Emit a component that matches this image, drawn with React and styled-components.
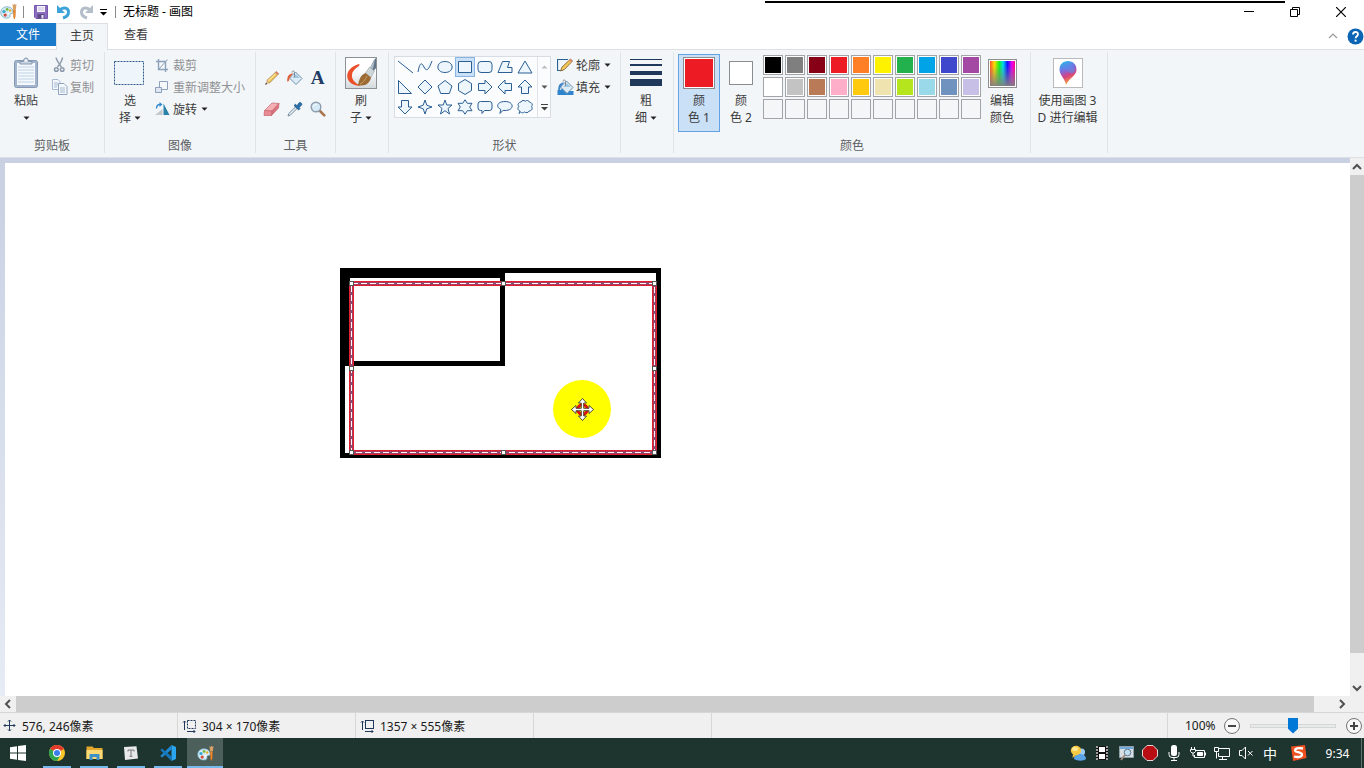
//External
import React, { useState } from 'react';
import styled, { createGlobalStyle } from 'styled-components';

//Colours
const colours = {
  ribbon: '#f3f6f8',
  line: '#dcdfe3',
  text: '#3b3b3b',
  disabled: '#8f9194',
  primary: '#1979ca',
  ink: '#2b5f94',
  selected: '#c9e0f7',
  selectedBorder: '#62a2e4',
  chrome: '#f0f0f0',
  thumb: '#cdcdcd',
  taskbar: '#1e342f',
  underline: '#76b9ed',
};

const GlobalStyle = createGlobalStyle`
  * {
    box-sizing: border-box;
  }

  body {
    margin: 0;
    overflow: hidden;
    font-family: "Noto Sans", "Noto Sans CJK SC", sans-serif;
    font-size: 12px;
    color: ${ colours.text };
  }

  button {
    font: inherit;
    color: inherit;
    background: none;
    border: 0;
    padding: 0;
    margin: 0;
  }

  svg {
    display: block;
    flex: none;
  }
`;

const Window = styled.div`
  display: flex;
  flex-direction: column;
  min-height: 100vh;
  background: #fff;
`;

//Title bar
const TitleBar = styled.header`
  position: relative;
  display: flex;
  align-items: center;
  height: 23px;
  color: #000;
`;

const QuickAccess = styled.div`
  display: flex;
  align-items: center;
  gap: 6px;
  margin-right: 3px;
`;

const QuickButton = styled.button`
  display: flex;
  justify-content: center;
  width: ${ props => props.$narrow ? '8px' : '16px' };
`;

const Divider = styled.span`
  width: 1px;
  height: 12px;
  margin: 0 4px 0 1px;
  background: #8a8a8a;
`;

const Title = styled.h1`
  margin: 0;
  font-size: 12px;
  font-weight: normal;
  line-height: 16px;
`;

const WindowButtons = styled.div`
  display: flex;
  margin-left: auto;
`;

const WindowButton = styled.button`
  display: flex;
  align-items: center;
  justify-content: center;
  width: 46px;
  height: 22px;
`;

const ShareMark = styled.span`
  position: absolute;
  top: 1px;
  right: 79px;
  width: 520px;
  height: 2px;
  background: #000;
`;

//Tabs
const Tabs = styled.nav`
  display: flex;
  height: 27px;
  border-bottom: 1px solid ${ colours.line };
`;

const Tab = styled.button`
  height: ${ props => props.$active ? '27px' : '23px' };
  width: ${ props => props.$wide ? '56px' : '52px' };
  line-height: 23px;
  background: ${ props => props.$file ? colours.primary : props.$active ? colours.ribbon : 'none' };
  color: ${ props => props.$file ? '#fff' : colours.text };
  border: solid ${ colours.line };
  border-width: ${ props => props.$active ? '1px 1px 0' : '0' };
  padding-bottom: ${ props => props.$active ? '4px' : '0' };
`;

const TabsEnd = styled.div`
  display: flex;
  align-items: center;
  gap: 9px;
  margin-left: auto;
`;

//Ribbon
const Ribbon = styled.section`
  display: flex;
  height: 108px;
  background: ${ colours.ribbon };
  border-bottom: 1px solid ${ colours.line };
`;

const Group = styled.div`
  display: flex;
  flex: none;
  flex-direction: column;
  width: ${ props => props.$width };
  margin: 2px 0 4px;
  padding-top: 2px;
  border-right: 1px solid #e0e4e8;
`;

const GroupBody = styled.div`
  display: flex;
  flex: 1;
  align-items: flex-start;
  padding: 0 4px;
  gap: ${ props => props.$gap || '0' };
`;

const GroupLabel = styled.span`
  line-height: 18px;
  height: 16px;
  text-align: center;
  color: #5c5f63;
`;

const BigButton = styled.button`
  display: flex;
  flex: none;
  flex-direction: column;
  align-items: center;
  width: ${ props => props.$width || '42px' };
  height: 78px;
  padding: 2px 0;
  line-height: 17px;
  white-space: nowrap;
  background: ${ props => props.$active ? colours.selected : 'none' };
  border: 1px solid ${ props => props.$active ? colours.selectedBorder : 'transparent' };
`;

const BigIcon = styled.span`
  display: flex;
  align-items: center;
  justify-content: center;
  height: 32px;
  margin-bottom: 3px;
`;

const TextLine = styled.span`
  display: flex;
  align-items: center;
  gap: 3px;
  height: 17px;
`;

const SmallButtons = styled.div`
  display: flex;
  flex-direction: column;
`;

const SmallButton = styled.button`
  display: flex;
  align-items: center;
  gap: 2px;
  height: 22px;
  padding: 0 2px;
  white-space: nowrap;
  color: ${ props => props.disabled ? colours.disabled : colours.text };
`;

const SmallLabel = styled.span`
  margin-right: 2px;
`;

const ToolGrid = styled.div`
  display: grid;
  grid-template-columns: repeat(3, 23px);
  grid-auto-rows: 31px;
  padding-top: 8px;
`;

const ToolButton = styled.button`
  display: flex;
  align-items: center;
  justify-content: center;
`;

const Gallery = styled.div`
  display: flex;
  gap: 2px;
  margin: 2px 0 0 1px;
  background: #fafcfd;
  border: 1px solid #d8dde3;
`;

const ShapeGrid = styled.div`
  display: grid;
  grid-template-columns: repeat(7, 20px);
  grid-auto-rows: 20px;
`;

const ShapeButton = styled.button`
  display: flex;
  align-items: center;
  justify-content: center;
  background: ${ props => props.$active ? colours.selected : 'none' };
  border: 1px solid ${ props => props.$active ? '#88b4e4' : 'transparent' };
`;

const GalleryScroll = styled.div`
  display: grid;
  grid-template-rows: repeat(3, 20px);
  width: 13px;
  border-left: 1px solid #e0e4e8;
`;

const Swatch = styled.span`
  width: ${ props => props.$size };
  height: ${ props => props.$size };
  background: ${ props => props.$colour };
  border: 1px solid #8a8c90;
  box-shadow: inset 0 0 0 1px #fff;
`;

const Palette = styled.div`
  display: grid;
  grid-template-columns: repeat(10, 20px);
  grid-auto-rows: 20px;
  gap: 2px;
  padding: 1px;
`;

const PaletteCell = styled.button`
  background: ${ props => props.$colour || '#f5f6f7' };
  border: 1px solid #a2a4a8;
  box-shadow: inset 0 0 0 1px ${ props => props.$colour ? '#fff' : '#f5f6f7' };
`;

const Spectrum = styled.span`
  width: 29px;
  height: 29px;
  border: 1px solid #8f8f8f;
  box-shadow: inset 0 0 0 1px #fff;
  background:
    linear-gradient(transparent 20%, #808080),
    linear-gradient(90deg, #f33, #fd0 20%, #1e2 38%, #0de 52%, #11f 68%, #e0e 85%, #f06);
`;

const Framed = styled.span`
  display: flex;
  align-items: center;
  justify-content: center;
  width: 30px;
  height: 30px;
  background: #fff;
  border: 1px solid #b8babd;
`;

const BrushFrame = styled(Framed)`
  width: 32px;
  height: 32px;
  border-color: #8d9299;
  background: linear-gradient(#fff 40%, #d4dade);
`;

//Work area
const WorkArea = styled.main`
  display: grid;
  flex: 1;
  grid-template-columns: 1fr 14px;
  grid-template-rows: 1fr 16px;
  background: ${ colours.chrome };
`;

const Desk = styled.div`
  display: flex;
  padding: 5px 0 0 5px;
  background: linear-gradient(#c8d0e1, #e6ebf5);
`;

const Canvas = styled.div`
  flex: 1;
  background: #fff;
`;

const VerticalScroll = styled.div`
  display: flex;
  flex-direction: column;
  padding-top: 1px;
`;

const HorizontalScroll = styled.div`
  display: flex;
`;

const ScrollButton = styled.button`
  display: flex;
  flex: none;
  align-items: center;
  justify-content: center;
  width: 16px;
  height: 16px;

  ${ VerticalScroll } & {
    width: 14px;
  }
`;

const ScrollTrack = styled.div`
  display: flex;
  flex: 1;
  flex-direction: ${ props => props.$vertical ? 'column' : 'row' };
`;

const ScrollThumb = styled.div`
  flex: 0 0 calc( 100% - ${ props => props.$rest } );
  background: ${ colours.thumb };
`;

//Status bar
const StatusBar = styled.footer`
  display: flex;
  height: 26px;
  color: #1a1a1a;
  background: ${ colours.chrome };
  border-top: 1px solid #d7d7d7;
`;

const StatusCell = styled.div`
  display: flex;
  align-items: center;
  gap: 4px;
  width: 178px;
  padding-left: ${ props => props.$first ? '2px' : '4px' };
  border-right: 1px solid #d7d7d7;
`;

const ZoomControls = styled.div`
  display: flex;
  align-items: center;
  margin-left: auto;
  padding: 0 1px 0 17px;
  border-left: 1px solid #d7d7d7;
`;

const ZoomLabel = styled.label`
  width: 38px;
`;

const ZoomSlider = styled.input`
  appearance: none;
  width: 86px;
  height: 16px;
  margin: 0 9px;
  background: none;

  &::-webkit-slider-runnable-track {
    height: 4px;
    background: #e7eaea;
    border: 1px solid #d6d6d6;
  }

  &::-webkit-slider-thumb {
    appearance: none;
    width: 10px;
    height: 16px;
    margin-top: -7px;
    background: #0078d7;
    clip-path: polygon(0 0, 100% 0, 100% 70%, 50% 100%, 0 70%);
  }
`;

//Taskbar
const Taskbar = styled.div`
  display: flex;
  height: 30px;
  background: ${ colours.taskbar };
`;

const Apps = styled.div`
  display: flex;
  gap: 1px;
`;

const AppButton = styled.button`
  display: flex;
  align-items: center;
  justify-content: center;
  width: 36px;
  height: 30px;
  background: linear-gradient(${ props => props.$open ? colours.underline : 'transparent' } 0 0) bottom / ${ props => props.$active ? '36px' : '28px' } 2px no-repeat ${ props => props.$active ? '#4c5f5b' : 'transparent' };
`;

const StartButton = styled(AppButton)`
  width: 38px;
  padding-right: 2px;
`;

const Tray = styled.div`
  display: flex;
  align-items: center;
  margin-left: auto;
  color: #fff;
  border-right: 1px solid #61726e;
  margin-right: 2px;
`;

const TrayButton = styled.button`
  display: flex;
  align-items: center;
  justify-content: center;
  width: ${ props => props.$width || '24px' };
  height: 30px;
`;

const Ime = styled.span`
  font-size: 14px;
`;

//Icons
const Arrow = ({ colour = '#222' }) => (
  <svg width="7" height="4" viewBox="0 0 7 4"><path d="M0.5 0.5h6L3.5 3.7z" fill={ colour } /></svg>
);

const Chevron = ({ turn = 0, colour = '#505050', size = 10, stroke = 2 }) => (
  <svg width={ size } height={ size } viewBox="0 0 10 10">
    <path d="M1 7l4-4 4 4" fill="none" stroke={ colour } strokeWidth={ stroke } transform={ `rotate(${ turn } 5 5)` } />
  </svg>
);

const PaintIcon = () => (
  <svg width="17" height="17" viewBox="0 0 18 18">
    <path d="M7.500 4C3.500 4 .8 6.500.8 10c0 3.600 2.700 6 6.500 6 3 0 3.600-1.500 3.300-2.900-.3-1.500.6-1.900 1.900-2 1.500-.1 1.800-1.300 1.300-2.900C13 5.700 10.800 4 7.500 4z" fill="#d5eaf5" stroke="#6ca6bd" strokeWidth=".8" />
    <circle cx="4.200" cy="9" r="1.700" fill="#35a7cf" />
    <circle cx="7.500" cy="6.800" r="1.500" fill="#79b83c" />
    <circle cx="10.700" cy="8" r="1.300" fill="#e5b02a" />
    <circle cx="5.500" cy="12.800" r="1.700" fill="#d34d3a" />
    <circle cx="9" cy="11.300" r="1.100" fill="#fff" />
    <path d="M14 7h2.500l-.4 7.500-.9 2.500-.9-2.500z" fill="#ee8b2d" stroke="#b3611a" strokeWidth=".4" />
    <path d="M13.200 1l1.200 1 1-1.300 1 1.200 1.100-.6-.7 5.200h-3z" fill="#d9a066" />
  </svg>
);

const SaveIcon = () => (
  <svg width="16" height="16" viewBox="0 0 16 16">
    <path d="M.5 1.500h13v13H2l-1.500-1.500z" fill="#8a6cc0" stroke="#7657ae" />
    <path d="M3 2h8v6H3z" fill="#f6f4fb" />
    <path d="M4 4h6M4 6h6" stroke="#c9bfe2" />
    <path d="M3.500 10h7v4.500h-7z" fill="#5b4a85" />
    <path d="M7.500 11h2v3.500h-2z" fill="#e9e4f4" />
  </svg>
);

const UndoIcon = ({ colour, flip }) => (
  <svg width="16" height="16" viewBox="0 0 16 16">
    <g transform={ flip ? 'matrix(-1 0 0 1 16 0)' : undefined }>
      <path d="M1 1v8h8z" fill={ colour } />
      <path d="M4.500 5.500C8 2.500 12.500 4 12.500 8c0 3.500-2 5-5.500 6" fill="none" stroke={ colour } strokeWidth="3" />
    </g>
  </svg>
);

const ClipboardIcon = () => (
  <svg width="26" height="32" viewBox="0 0 26 32">
    <rect x="1.500" y="3.500" width="23" height="27" rx="2" fill="#a3b5cd" stroke="#8799b4" />
    <path d="M4 6h18v22H4z" fill="#f5f9fd" />
    <path d="M5 10h16M5 13h16M5 16h16M5 19h16M5 22h16M5 25h16" stroke="#bed1e6" />
    <path d="M7 7V4.500h3.500C10.500 2 11.500 1 13 1s2.500 1 2.500 3.500H19V7z" fill="#ccd6e3" stroke="#8597b0" />
    <circle cx="13" cy="3.500" r="1" fill="#fff" />
  </svg>
);

const ScissorsIcon = () => (
  <svg width="16" height="16" viewBox="0 0 16 16" fill="none" stroke="#8d99ac" strokeWidth="1.500">
    <path d="M4 .5c.5 3 3 6 5.500 9.500M10.500.5C10 4 8 7 5.500 10" />
    <circle cx="4.300" cy="12.500" r="1.800" /><circle cx="10.200" cy="12.500" r="1.800" />
  </svg>
);

const CopyIcon = () => (
  <svg width="16" height="16" viewBox="0 0 16 16" fill="#f4f8fc" stroke="#a9bbd2">
    <path d="M.5.5h5.500l2 2v8H.5z" /><path d="M2 4h4M2 6h4M2 8h3" />
    <path d="M6.500 4.500H12l3 3v8H6.500z" stroke="#91a5c0" /><path d="M8 9h5M8 11h5M8 13h5" />
  </svg>
);

const SelectIcon = () => (
  <svg width="32" height="26" viewBox="0 0 32 26">
    <rect x=".5" y="1.500" width="29" height="23" fill="#eef6fc" stroke="#2f5888" strokeDasharray="2 1" />
  </svg>
);

const CropIcon = () => (
  <svg width="16" height="16" viewBox="0 0 16 16" fill="none" stroke="#8ea1bb">
    <path d="M3.500 2v10.500H13M1 4.500h9.500V15" strokeWidth="1.400" /><path d="M4 12L12.500 2.500" />
  </svg>
);

const ResizeIcon = () => (
  <svg width="16" height="16" viewBox="0 0 16 16" fill="#f4f8fc" stroke="#8ea1bb">
    <path d="M4.500 2.500h8v8h-8z" /><path d="M.5 8.500h6v5h-6z" fill="#dfe8f2" />
  </svg>
);

const RotateIcon = () => (
  <svg width="16" height="16" viewBox="0 0 16 16">
    <path d="M0 14L7.500 8v6z" fill="#c3c8cd" />
    <path d="M8.500 2.500V14h6z" fill="#2a82a8" />
    <path d="M1.500 7.500c0-3 1.500-4 3.500-4" fill="none" stroke="#3289ce" strokeWidth="1.400" />
    <path d="M4.500 1L7.500 3.500 4.500 6z" fill="#3289ce" />
  </svg>
);

const PencilIcon = () => (
  <svg width="16" height="16" viewBox="0 0 16 16">
    <path d="M12.300 1.500l2.400 2.300-9.200 9.200-2.700-2.400z" fill="#f0c456" stroke="#9b7236" strokeWidth=".7" />
    <path d="M3.800 10.400l7.200-7 .9.900-7.200 7z" fill="#fbe7a0" />
    <path d="M12.300 1.500l2.400 2.300-1.300 1.300-2.400-2.300z" fill="#dc8576" />
    <path d="M2.800 10.600l2.700 2.400L1.300 14.700z" fill="#dcb98f" />
    <path d="M1.300 14.700l.6-1.900 1.300 1.200z" fill="#222" />
  </svg>
);

const BucketIcon = ({ pool }) => (
  <svg width="17" height="16" viewBox="0 0 16 16">
    { pool && <path d="M0 11h3l2-2 3 3h8v4H0z" fill="#2e84cd" /> }
    <path d="M9 2l6.500 6.500-6 6L3 8z" fill="#dcebf5" stroke="#6c91ae" />
    <path d="M5.500 8l4-3.800 3.800 3.800z" fill="#9fc6df" />
    <path d="M8 7V2.500C8 .5 5.500.5 5.500 2.500" fill="none" stroke="#7b8997" />
    <path d="M6.500 3.500C3 3.500.5 5.500.7 11.500c2 .5 2-2 2.500-3.500z" fill={ pool ? '#3e86c7' : '#e0603b' } />
  </svg>
);

const LetterIcon = styled.span`
  font-family: "Liberation Serif", serif;
  font-size: 19px;
  font-weight: bold;
  line-height: 20px;
  color: #203c66;
`;

const EraserIcon = () => (
  <svg width="18" height="16" viewBox="0 0 18 16" stroke="#c66470" strokeWidth=".7">
    <path d="M1.500 9.500L9 2l7 .5L9 10z" fill="#f4b0b4" />
    <path d="M1.500 9.500L9 10l-.5 4.500H1z" fill="#e98a92" />
    <path d="M9 10l7-7.500-.5 4.500-7 7.500z" fill="#d9737e" />
  </svg>
);

const PickerIcon = () => (
  <svg width="16" height="16" viewBox="0 0 16 16">
    <path d="M9 5.500l1.500 1.500-7 7-2.500 1 .8-2.500z" fill="#e6f0f7" stroke="#768a9c" />
    <path d="M7 4.500l1.500-1.300L10 4.700 12 2c1.300-1.500 3.800.8 2.500 2.300L12 6.500l1 1L11.700 9z" fill="#2772ad" stroke="#164978" strokeWidth=".7" />
  </svg>
);

const MagnifierIcon = () => (
  <svg width="16" height="16" viewBox="0 0 16 16">
    <path d="M9.500 9.500l4.800 4.800" stroke="#a9754c" strokeWidth="2.600" strokeLinecap="round" />
    <circle cx="6" cy="6" r="4.800" fill="#d5e9f7" stroke="#8d9dad" strokeWidth="1.400" />
    <path d="M3.500 5.500C4 4 5 3.500 6.500 3.500" stroke="#fff" fill="none" />
  </svg>
);

const BrushIcon = () => (
  <svg width="30" height="30" viewBox="0 0 30 30">
    <path d="M13 6C5 8 0 14 1.500 20c1.200 5 6 7.500 13 8-5-3-9-6-8.500-11 .3-4 3-6 7-9 0 0 1-1.500 0-2z" fill="#ea4f2a" />
    <path d="M24 10l4-8 2-2v10l-3 4z" fill="#5f7489" />
    <path d="M24 10l5-9-2 10z" fill="#aebdca" />
    <path d="M19.500 15l4-6 5 4-3.500 6.500z" fill="#cfd6da" stroke="#8f999f" strokeWidth=".5" />
    <path d="M12 27c1-4 2-10 7.500-12l5.500 4.500c-1 5.500-6 9.500-13 7.500z" fill="#9c6a35" />
    <path d="M14 26c3-1 5-4 7-8" stroke="#cf9f5c" fill="none" />
  </svg>
);

const OutlineIcon = () => (
  <svg width="17" height="16" viewBox="0 0 17 16">
    <path d="M11 2.500H.5v11h5" fill="none" stroke="#2a6396" strokeWidth="1.200" />
    <path d="M13.500 2l2 2-8 8.500-4 1.500 1.500-4z" fill="#f0c456" stroke="#82602d" strokeWidth=".8" />
    <path d="M13.500 2l2 2-1.300 1.300-2.100-2z" fill="#dc8576" />
  </svg>
);

const ThicknessIcon = () => (
  <svg width="32" height="28" viewBox="0 0 32 28" fill="#20385a">
    <path d="M0 0h32v1H0zM0 5h32v2H0zM0 12h32v4H0zM0 20h32v7H0z" />
  </svg>
);

const Paint3DIcon = () => (
  <svg width="20" height="26" viewBox="0 0 20 26">
    <defs>
      <linearGradient id="drop" x1="0.300" y1="0" x2="0.600" y2="1">
        <stop offset="0" stopColor="#28b9e8" />
        <stop offset=".35" stopColor="#7d6be0" />
        <stop offset=".62" stopColor="#d8417e" />
        <stop offset="1" stopColor="#ffc02e" />
      </linearGradient>
    </defs>
    <path d="M10 1c5 0 8.500 3.500 8.500 8.500 0 6.500-7 8-10.500 15.500C7.500 19 1.500 15.500 1.500 9.500 1.500 4.500 5 1 10 1z" fill="url(#drop)" />
    <path d="M4 8c1-4 4-5 7-4 4 1 6 4 6 7-1 3-4 3-6 1S6 9 4 8z" fill="#4d94ee" opacity=".5" />
  </svg>
);

const HelpIcon = () => (
  <svg width="17" height="17" viewBox="0 0 17 17">
    <circle cx="8.500" cy="8.500" r="8" fill="#0b64b4" />
    <path d="M6 6.500C6 3.200 11 3.200 11 6.300c0 2-2.400 2-2.400 4" fill="none" stroke="#fff" strokeWidth="1.800" />
    <circle cx="8.600" cy="12.700" r="1.100" fill="#fff" />
  </svg>
);

const shapes = [
  { name: '直线', path: 'M1 2l15 12' },
  { name: '曲线', path: 'M1 13C3 2 5 4 7 8s4 5 8-6' },
  { name: '椭圆形', path: 'M8 2.500c9.500 0 9.500 11 0 11s-9.500-11 0-11z' },
  { name: '矩形', path: 'M1.500 2.500h13v11h-13z' },
  { name: '圆角矩形', path: 'M4 2.500h8q3 0 3 3v5q0 3-3 3H4q-3 0-3-3v-5q0-3 3-3z' },
  { name: '多边形', path: 'M5.500 2.500h7l-2 6h4.500v5H1z' },
  { name: '三角形', path: 'M8 2l7 12H1z' },
  { name: '直角三角形', path: 'M1.500 1.500v13h13z' },
  { name: '菱形', path: 'M8 1l7 7-7 7-7-7z' },
  { name: '五边形', path: 'M8 1.500l7 5.500-2.700 7.500H3.700L1 7z' },
  { name: '六边形', path: 'M8 .5l6.500 4v7l-6.500 4-6.500-4v-7z' },
  { name: '右箭头', path: 'M1.500 4.500H8v-3.500l7 7-7 7v-3.500H1.500z' },
  { name: '左箭头', path: 'M14.500 4.500H8v-3.500l-7 7 7 7v-3.500h6.500z' },
  { name: '向上箭头', path: 'M4.500 14.500V8H1l7-7 7 7h-3.500v6.500z' },
  { name: '向下箭头', path: 'M4.500 1.500V8H1l7 7 7-7h-3.500V1.500z' },
  { name: '四角星', path: 'M8 1l1.800 5.200L15 8 9.800 9.800 8 15 6.200 9.800 1 8l5.200-1.800z' },
  { name: '五角星', path: 'M8 1l1.800 5H15l-4 3.500 1.500 5.500L8 11.700 3.500 15 5 9.500 1 6h5.200z' },
  { name: '六角星', path: 'M8 .8l2.300 3.500H15L12.700 8l2.300 3.700h-4.700L8 15.200l-2.300-3.500H1L3.300 8 1 4.300h4.700z' },
  { name: '圆角矩形标注', path: 'M3.500 2.500h9Q15 2.500 15 5v4q0 2.500-2.500 2.500H7.500L5 14.500v-3H3.500Q1 11.500 1 9V5q0-2.500 2.500-2.500z' },
  { name: '椭圆形标注', path: 'M8 2.500c9.500 0 9.500 9 0 9-1 0-1.500 0-2-.2L3 14.500l.8-4C-1.500 8 0 2.500 8 2.500z' },
  { name: '云形标注', path: 'M4 3c1-2 3-2 4.200-.7C9.500.8 12 1.500 12.500 3.200c2.800.3 3.500 3 2 4.500 1.500 2 .2 4-2.300 4.300-1 2-3.200 2-4.500 1-1.500 1.200-3 1-4 0L2 14.500 3 12C1 11.500.2 9 1.800 7.600.2 5.500 1.500 3.300 4 3z' },
];

const palette = [
  '#000000', '#7f7f7f', '#880015', '#ed1c24', '#ff7f27', '#fff200', '#22b14c', '#00a2e8', '#3f48cc', '#a349a4',
  '#ffffff', '#c3c3c3', '#b97a57', '#ffaec9', '#ffc90e', '#efe4b0', '#b5e61d', '#99d9ea', '#7092be', '#c8bfe7',
  null, null, null, null, null, null, null, null, null, null,
];

const handles = [
  [346, 120], [498, 120], [649, 120],
  [346, 205], [649, 205],
  [346, 289], [498, 289], [649, 289],
];

const Drawing = () => (
  <svg width="700" height="320" viewBox="0 0 700 320" shapeRendering="crispEdges">
    <g fill="none" stroke="#000" strokeWidth="5">
      <path d="M337.500 107.500h316v185h-316z" />
      <path d="M342.500 112.500h155v88h-155z" />
      <path d="M337.500 203v-95.500h160V203" />
    </g>
    <path d="M346.500 120.500h303v169h-303z" fill="none" stroke="#e3202f" strokeWidth="5" />
    <path d="M346.500 120.500h303v169h-303z" fill="none" stroke="#a83a5e" strokeWidth="3" />
    <path d="M346.500 120.500h303v169h-303z" fill="none" stroke="#7d5580" />
    <path d="M346.500 120.500h303v169h-303z" fill="none" stroke="#fff" strokeDasharray="6 3" />
    { handles.map( ([ x, y ]) => (
      <rect key={ `${ x }-${ y }` } x={ x - 1.500 } y={ y - 1.500 } width="4" height="4" fill="#fff" stroke="#555" />
    ) ) }
    <circle cx="577" cy="246" r="29" fill="#ff0" shapeRendering="auto" />
    <g transform="translate(577.500 246.500)" shapeRendering="auto">
      <circle r="4.800" fill="#ffe000" stroke="#e01010" strokeWidth="3" />
      <path d="M0-11l4 4.500H1.200v5.300h5.300V-4L11 0 6.500 4V1.200H1.200v5.300H4L0 11l-4-4.500h2.800V1.200h-5.300V4L-11 0l4.500-4v2.800h5.300v-5.300H-4z" fill="#fff" stroke="#222" strokeWidth=".8" />
    </g>
  </svg>
);

const Status = ({ kind }) => (
  <svg width="16" height="16" viewBox="0 0 16 16" fill="none" stroke="#20385a">
    { kind === 'position' && <path d="M7.500 2v11M2 7.500h11M6 3.500L7.500 2 9 3.500M6 11.500L7.500 13 9 11.500M3.500 6L2 7.500 3.500 9M11.500 6L13 7.500 11.500 9" /> }
    { kind !== 'position' && (
      <>
        <rect x="5.500" y="2.500" width="8" height="8" strokeDasharray={ kind === 'selection' ? '2 1' : undefined } />
        <path d="M2.500 12V3M1 4.500L2.500 3 4 4.500M5 13.500h8M11.500 12l1.500 1.500-1.500 1.500" />
      </>
    ) }
  </svg>
);

const ZoomButtonIcon = ({ plus }) => (
  <svg width="18" height="18" viewBox="0 0 18 18">
    <circle cx="9" cy="9" r="7.500" fill="#f8f8f8" stroke="#747474" />
    <path d={ plus ? 'M5 9h8M9 5v8' : 'M5 9h8' } stroke="#444" strokeWidth="2" />
  </svg>
);

const WindowsIcon = () => (
  <svg width="16" height="16" viewBox="0 0 16 16" fill="#fff">
    <path d="M0 2.200L7 1.200v6.300H0zM8 1l8-1v7.500H8zM0 8.500h7v6.300l-7-1zM8 8.500h8V16l-8-1z" />
  </svg>
);

const ChromeIcon = () => (
  <svg width="16" height="16" viewBox="0 0 16 16">
    <circle cx="8" cy="8" r="8" fill="#f9c828" />
    <path d="M8 8L1.070 4A8 8 0 0 1 14.930 4z" fill="#e33b2e" />
    <path d="M8 8L1.070 4A8 8 0 0 0 8 16l3.500-6z" fill="#2da44f" />
    <circle cx="8" cy="8" r="4" fill="#fff" /><circle cx="8" cy="8" r="3" fill="#3b7ded" />
  </svg>
);

const FolderIcon = () => (
  <svg width="17" height="16" viewBox="0 0 17 16">
    <path d="M.5 1.500h6L8 3h8.500v11H.5z" fill="#e3a72c" />
    <path d="M.5 5h16v9H.5z" fill="#fbd975" />
    <path d="M3.500 15V9h10v6h-3v-3h-4v3z" fill="#3f91c9" />
  </svg>
);

const TyporaIcon = () => (
  <svg width="14" height="14" viewBox="0 0 14 14">
    <path d="M0 1l12.500-.8L14 12.500 1 14z" fill="#e8e9ea" />
    <path d="M4 5.500V4h6v1.500M7 4v6M5.500 10.300h3" stroke="#777" fill="none" />
  </svg>
);

const CodeIcon = () => (
  <svg width="16" height="16" viewBox="0 0 16 16">
    <path d="M11.500 0L16 2v12l-4.500 2z" fill="#2aa5ef" />
    <path d="M11.500 0v4.500L2 12.500.3 11z" fill="#1f8ad3" />
    <path d="M11.500 16v-4.500L2 3.500.3 5z" fill="#1577bd" />
  </svg>
);

const trayIcons = [
  {
    name: '同步',
    icon: (
      <svg width="16" height="16" viewBox="0 0 16 16">
        <circle cx="11.500" cy="7" r="3.500" fill="#9dcdf3" /><path d="M4 14c0-4 3-5 6-5s6 1.500 6 5c-2 2-8 2.500-12 0z" fill="#5ba4e5" />
        <ellipse cx="6" cy="5.500" rx="5.200" ry="4.700" fill="#f6c93f" /><path d="M3 9l-.5 4L7 9.500z" fill="#f6c93f" /><ellipse cx="5" cy="4" rx="3" ry="2" fill="#ffe995" />
      </svg>
    ),
  },
  {
    name: '视频',
    icon: (
      <svg width="12" height="14" viewBox="0 0 12 14">
        <path d="M0 0h12v14H0z" fill="#111" /><path d="M3 1h6v5H3zM3 8h6v5H3z" fill="#fff" />
        <path d="M1 0v14M11 0v14" stroke="#fff" strokeWidth="1.200" strokeDasharray="2 1" />
      </svg>
    ),
  },
  {
    name: '查看器',
    icon: (
      <svg width="15" height="15" viewBox="0 0 15 15">
        <path d="M.5.500h14v11H.500z" fill="#d7dee3" stroke="#8fa0ac" /><path d="M1 1h13v2H1z" fill="#6fabdc" />
        <circle cx="8.500" cy="6.500" r="3.300" fill="#bfdff1" stroke="#63798a" /><path d="M6 9l-4 5" stroke="#a3897b" strokeWidth="2" />
      </svg>
    ),
  },
  {
    name: '录制',
    icon: <svg width="16" height="16" viewBox="0 0 16 16"><path d="M5 .5h6L15.500 5v6L11 15.500H5L.5 11V5z" fill="#b80d12" stroke="#e8d5d5" /></svg>,
  },
  {
    name: '麦克风',
    icon: <svg width="12" height="16" viewBox="0 0 12 16"><rect x="3" width="6" height="11" rx="2.500" fill="#fff" /><path d="M1 7v2.500q0 3 3 3h4q3 0 3-3V7M6 12.500V15M3 15.500h6" fill="none" stroke="#fff" /></svg>,
  },
  {
    name: '电源',
    icon: <svg width="16" height="13" viewBox="0 0 16 13" fill="none" stroke="#fff"><path d="M6 3.500h8.500v7H4.500V8M15.500 5.500v3" /><path d="M7.500 5.500h5v3h-5z" fill="#fff" /><path d="M1.500 0v2.500M4.500 0v2.500M.500 2.500h5v2l-1.500 1.500H2L.5 4.500zM3 6v3h2" /></svg>,
  },
  {
    name: '网络',
    icon: <svg width="16" height="15" viewBox="0 0 16 15" fill="none" stroke="#fff"><path d="M5 2.500h10.500v8h-11V7M8.500 10.500v3M5 13.500h8M.5 1.500h4v4h-4zM2.500 5.500v7" /></svg>,
  },
  {
    name: '静音',
    icon: <svg width="15" height="14" viewBox="0 0 15 14" fill="none" stroke="#fff"><path d="M.5 4.500h2.500l3.500-3.500v12L3 9.500H.5zM9 5l4.500 4.500M13.500 5L9 9.500" /></svg>,
  },
];

const SogouIcon = () => (
  <svg width="17" height="16" viewBox="0 0 17 16">
    <path d="M1 1.500L15 0l1.500 13L3 16z" fill="#f04f20" />
    <path d="M13 3.500C8 2.500 5 3.500 5 5.500s7 1.500 7 4-4 3-8 2" fill="none" stroke="#fff" strokeWidth="2.300" />
  </svg>
);

const RibbonGroup = ({ label, width, gap, children }) => (
  <Group $width={ width }>
    <GroupBody $gap={ gap }>{ children }</GroupBody>
    <GroupLabel>{ label }</GroupLabel>
  </Group>
);

export default function App() {
  const [ activeShape, setActiveShape ] = useState( '矩形' );
  const [ zoom, setZoom ] = useState( 50 );

  return (
    <Window>
      <GlobalStyle />

      <TitleBar>
        <QuickAccess>
          <QuickButton aria-label="画图"><PaintIcon /></QuickButton>
          <Divider />
          <QuickButton aria-label="保存"><SaveIcon /></QuickButton>
          <QuickButton aria-label="撤消"><UndoIcon colour="#3ba3da" /></QuickButton>
          <QuickButton aria-label="重做"><UndoIcon colour="#b4bec9" flip /></QuickButton>
          <QuickButton $narrow aria-label="自定义快速访问工具栏">
            <svg width="8" height="8" viewBox="0 0 8 8"><path d="M0 1h7v1H0zM0 4h7L3.500 7.500z" /></svg>
          </QuickButton>
          <Divider />
        </QuickAccess>
        <Title>无标题 - 画图</Title>
        <WindowButtons>
          <WindowButton aria-label="最小化">
            <svg width="10" height="10" viewBox="0 0 10 10"><path d="M0 4.500h10" stroke="#000" /></svg>
          </WindowButton>
          <WindowButton aria-label="还原">
            <svg width="10" height="10" viewBox="0 0 10 10" fill="none" stroke="#000"><path d="M.5 2.500h7v7h-7zM2.500 2.500v-2h7v7h-2" /></svg>
          </WindowButton>
          <WindowButton aria-label="关闭">
            <svg width="10" height="10" viewBox="0 0 10 10"><path d="M0 0l10 10M10 0L0 10" stroke="#000" strokeWidth="1.200" /></svg>
          </WindowButton>
        </WindowButtons>
        <ShareMark />
      </TitleBar>

      <Tabs>
        <Tab $file $wide>文件</Tab>
        <Tab $active>主页</Tab>
        <Tab $wide>查看</Tab>
        <TabsEnd>
          <button aria-label="最小化功能区"><Chevron colour="#9a9a9a" stroke={ 1.2 } /></button>
          <button aria-label="帮助"><HelpIcon /></button>
        </TabsEnd>
      </Tabs>

      <Ribbon>
        <RibbonGroup label="剪贴板" width="105px" gap="2px">
          <BigButton $width="44px">
            <BigIcon><ClipboardIcon /></BigIcon>
            <TextLine>粘贴</TextLine>
            <TextLine><Arrow /></TextLine>
          </BigButton>
          <SmallButtons>
            <SmallButton disabled><ScissorsIcon />剪切</SmallButton>
            <SmallButton disabled><CopyIcon />复制</SmallButton>
          </SmallButtons>
        </RibbonGroup>

        <RibbonGroup label="图像" width="151px" gap="2px">
          <BigButton>
            <BigIcon><SelectIcon /></BigIcon>
            <TextLine>选</TextLine>
            <TextLine>择<Arrow /></TextLine>
          </BigButton>
          <SmallButtons>
            <SmallButton disabled><CropIcon />裁剪</SmallButton>
            <SmallButton disabled><ResizeIcon />重新调整大小</SmallButton>
            <SmallButton><RotateIcon /><SmallLabel>旋转</SmallLabel><Arrow /></SmallButton>
          </SmallButtons>
        </RibbonGroup>

        <RibbonGroup label="工具" width="80px">
          <ToolGrid>
            <ToolButton aria-label="铅笔"><PencilIcon /></ToolButton>
            <ToolButton aria-label="用颜色填充"><BucketIcon /></ToolButton>
            <ToolButton><LetterIcon>A</LetterIcon></ToolButton>
            <ToolButton aria-label="橡皮擦"><EraserIcon /></ToolButton>
            <ToolButton aria-label="颜色选取器"><PickerIcon /></ToolButton>
            <ToolButton aria-label="放大镜"><MagnifierIcon /></ToolButton>
          </ToolGrid>
        </RibbonGroup>

        <RibbonGroup width="53px">
          <BigButton>
            <BigIcon><BrushFrame><BrushIcon /></BrushFrame></BigIcon>
            <TextLine>刷</TextLine>
            <TextLine>子<Arrow /></TextLine>
          </BigButton>
        </RibbonGroup>

        <RibbonGroup label="形状" width="232px" gap="4px">
          <Gallery>
            <ShapeGrid>
              { shapes.map( shape => (
                <ShapeButton
                  key={ shape.name }
                  aria-label={ shape.name }
                  $active={ shape.name === activeShape }
                  onClick={ () => setActiveShape( shape.name ) }>
                  <svg width="16" height="16" viewBox="0 0 16 16">
                    <path d={ shape.path } fill="#edf6fc" stroke={ colours.ink } />
                  </svg>
                </ShapeButton>
              ) ) }
            </ShapeGrid>
            <GalleryScroll>
              <ToolButton aria-label="上一行">
                <svg width="7" height="4" viewBox="0 0 7 4"><path d="M.5 3.500h6l-3-3z" fill="#b9bdc2" /></svg>
              </ToolButton>
              <ToolButton aria-label="下一行"><Arrow colour="#555" /></ToolButton>
              <ToolButton aria-label="更多形状">
                <svg width="7" height="7" viewBox="0 0 7 7" fill="#444"><path d="M0 0h7v1H0zM0 3h7L3.500 6.500z" /></svg>
              </ToolButton>
            </GalleryScroll>
          </Gallery>
          <SmallButtons>
            <SmallButton><OutlineIcon /><SmallLabel>轮廓</SmallLabel><Arrow /></SmallButton>
            <SmallButton><BucketIcon pool /><SmallLabel>填充</SmallLabel><Arrow /></SmallButton>
          </SmallButtons>
        </RibbonGroup>

        <RibbonGroup width="53px">
          <BigButton>
            <BigIcon><ThicknessIcon /></BigIcon>
            <TextLine>粗</TextLine>
            <TextLine>细<Arrow /></TextLine>
          </BigButton>
        </RibbonGroup>

        <RibbonGroup label="颜色" width="357px">
          <BigButton $active>
            <BigIcon><Swatch $size="32px" $colour="#ed1c24" /></BigIcon>
            <TextLine>颜</TextLine>
            <TextLine>色 1</TextLine>
          </BigButton>
          <BigButton>
            <BigIcon><Swatch $size="24px" $colour="#fff" /></BigIcon>
            <TextLine>颜</TextLine>
            <TextLine>色 2</TextLine>
          </BigButton>
          <Palette>
            { palette.map( ( colour, index ) => (
              <PaletteCell key={ index } $colour={ colour } aria-label={ colour || '自定义' } />
            ) ) }
          </Palette>
          <BigButton $width="40px">
            <BigIcon><Spectrum /></BigIcon>
            <TextLine>编辑</TextLine>
            <TextLine>颜色</TextLine>
          </BigButton>
        </RibbonGroup>

        <RibbonGroup width="77px">
          <BigButton $width="65px">
            <BigIcon><Framed><Paint3DIcon /></Framed></BigIcon>
            <TextLine>使用画图 3</TextLine>
            <TextLine>D 进行编辑</TextLine>
          </BigButton>
        </RibbonGroup>
      </Ribbon>

      <WorkArea>
        <Desk>
          <Canvas><Drawing /></Canvas>
        </Desk>
        <VerticalScroll>
          <ScrollButton aria-label="向上"><Chevron /></ScrollButton>
          <ScrollTrack $vertical><ScrollThumb $rest="27px" /></ScrollTrack>
          <ScrollButton aria-label="向下"><Chevron turn={ 180 } /></ScrollButton>
        </VerticalScroll>
        <HorizontalScroll>
          <ScrollButton aria-label="向左"><Chevron turn={ -90 } /></ScrollButton>
          <ScrollTrack><ScrollThumb $rest="20px" /></ScrollTrack>
          <ScrollButton aria-label="向右"><Chevron turn={ 90 } /></ScrollButton>
        </HorizontalScroll>
      </WorkArea>

      <StatusBar>
        <StatusCell $first><Status kind="position" />576, 246像素</StatusCell>
        <StatusCell><Status kind="selection" />304 × 170像素</StatusCell>
        <StatusCell><Status kind="size" />1357 × 555像素</StatusCell>
        <StatusCell />
        <ZoomControls>
          <ZoomLabel htmlFor="zoom">100%</ZoomLabel>
          <button aria-label="缩小"><ZoomButtonIcon /></button>
          <ZoomSlider id="zoom" type="range" value={ zoom } onChange={ event => setZoom( event.target.value ) } />
          <button aria-label="放大"><ZoomButtonIcon plus /></button>
        </ZoomControls>
      </StatusBar>

      <Taskbar>
        <Apps>
          <StartButton aria-label="开始"><WindowsIcon /></StartButton>
          <AppButton $open aria-label="Chrome"><ChromeIcon /></AppButton>
          <AppButton $open aria-label="文件资源管理器"><FolderIcon /></AppButton>
          <AppButton $open aria-label="Typora"><TyporaIcon /></AppButton>
          <AppButton $open aria-label="Visual Studio Code"><CodeIcon /></AppButton>
          <AppButton $open $active aria-label="画图"><PaintIcon /></AppButton>
        </Apps>
        <Tray>
          { trayIcons.map( item => (
            <TrayButton key={ item.name } aria-label={ item.name }>{ item.icon }</TrayButton>
          ) ) }
          <TrayButton><Ime>中</Ime></TrayButton>
          <TrayButton $width="32px" aria-label="输入法"><SogouIcon /></TrayButton>
          <TrayButton $width="47px">9:34</TrayButton>
        </Tray>
      </Taskbar>
    </Window>
  );
}
